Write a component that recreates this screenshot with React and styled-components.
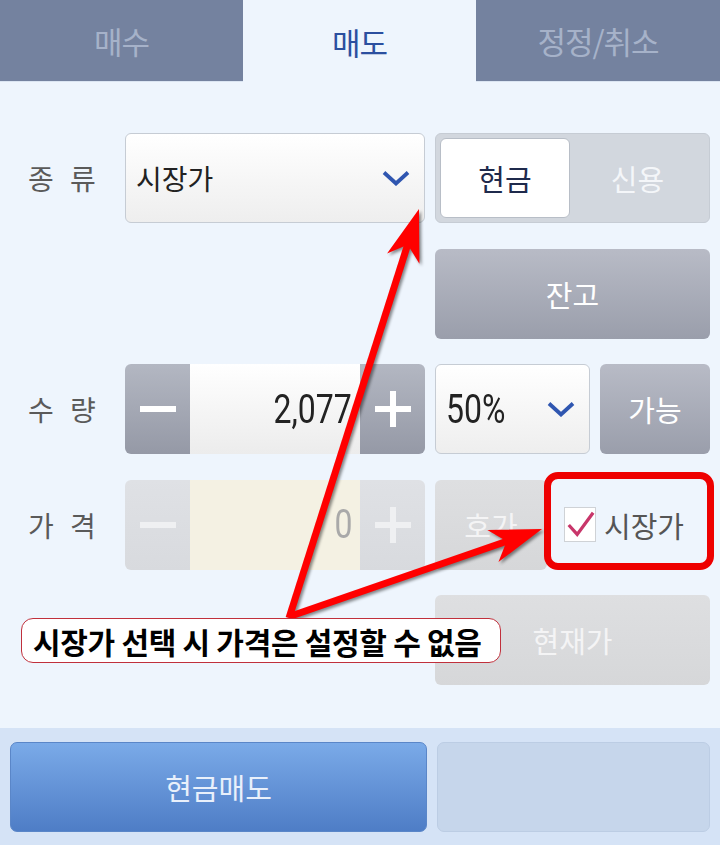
import React from 'react';
import styled, { createGlobalStyle, css } from 'styled-components';

const GlobalStyle = createGlobalStyle`
  html, body {
    margin: 0;
    padding: 0;
    background: #eef5fd;
  }
  body {
    font-family: 'Noto Sans CJK KR', 'Noto Sans', sans-serif;
  }
`;

const Screen = styled.div`
  position: relative;
  display: flex;
  flex-direction: column;
  width: 720px;
  height: 845px;
  overflow: hidden;
  background: #eef5fd;
`;

const Tabs = styled.nav`
  display: grid;
  grid-template-columns: 243px 233px 244px;
  height: 82px;
`;

const Tab = styled.div`
  display: flex;
  align-items: center;
  justify-content: center;
  font-size: 31px;
  letter-spacing: -1px;
  color: #a6b2c9;
  background: #74829f;
  border-bottom: 1px solid #dbe5f2;
  box-sizing: border-box;

  ${(p) =>
    p.active &&
    css`
      color: #2b4f9f;
      background: #eef5fd;
      border-bottom: none;
    `}
`;

const Form = styled.div`
  display: flex;
  flex-direction: column;
  gap: 25.5px;
  padding: 51px 10px 0 0;
`;

const Row = styled.div`
  display: flex;
  align-items: center;
  height: 90px;
`;

const Label = styled.div`
  width: 125px;
  padding-left: 28px;
  box-sizing: border-box;
  font-size: 28px;
  letter-spacing: 5px;
  color: #5a5a5a;
`;

const Main = styled.div`
  display: flex;
  width: 300px;
  height: 100%;
  margin-right: 10px;
`;

const Side = styled.div`
  display: flex;
  gap: 10px;
  width: 275px;
  height: 100%;
`;

const Select = styled.div`
  display: flex;
  align-items: center;
  justify-content: space-between;
  flex: ${(p) => (p.width ? `0 0 ${p.width}px` : '1')};
  height: 100%;
  padding: 0 ${(p) => p.padRight || 14}px 0 10px;
  box-sizing: border-box;
  border: 1px solid #c6ccd4;
  border-radius: 6px;
  background: linear-gradient(#ffffff, #eeeeee);
  font-size: 28px;
  color: #222;
`;

const Num = styled.span`
  display: inline-block;
  font-family: Roboto, 'Noto Sans', sans-serif;
  font-size: 40px;
  transform: scaleX(0.8);
  transform-origin: ${(p) => p.origin || 'left'} center;
  color: ${(p) => p.color || '#222'};
`;

const Toggle = styled.div`
  display: flex;
  flex: 1;
  padding: 4px;
  border: 1px solid #c6ccd4;
  border-radius: 6px;
  background: #d2d7de;
`;

const ToggleItem = styled.div`
  display: flex;
  align-items: center;
  justify-content: center;
  flex: ${(p) => (p.on ? '0 0 128px' : '1')};
  font-size: 29px;
  color: #f4f6f9;

  ${(p) =>
    p.on &&
    css`
      color: #1f2a4c;
      background: #fff;
      border: 1px solid #b8bec7;
      border-radius: 6px;
    `}
`;

const Button = styled.div`
  display: flex;
  align-items: center;
  justify-content: center;
  flex: ${(p) => (p.width ? `0 0 ${p.width}px` : '1')};
  height: 100%;
  border-radius: 6px;
  font-size: 29px;
  color: #fff;
  background: linear-gradient(#b8bbc6, #9a9eab);

  ${(p) =>
    p.disabled &&
    css`
      color: #f4f4f5;
      background: linear-gradient(#dedfe1, #d6d7d9);
    `}
`;

const Stepper = styled.div`
  display: flex;
  width: 300px;
  height: 100%;
  border-radius: 6px;
  overflow: hidden;
`;

const StepBtn = styled.div`
  display: flex;
  align-items: center;
  justify-content: center;
  flex: 0 0 65px;
  background: ${(p) =>
    p.disabled ? 'linear-gradient(#dfe1e5, #d8dade)' : 'linear-gradient(#b3b7c2, #9599a6)'};
`;

const StepValue = styled.div`
  display: flex;
  align-items: center;
  justify-content: flex-end;
  flex: 1;
  padding-right: 8px;
  background: ${(p) => (p.disabled ? '#f4f1e3' : 'linear-gradient(#ffffff, #ececec)')};
`;

const CheckLabel = styled.div`
  display: flex;
  align-items: center;
  gap: 8px;
  padding-left: 7px;
  font-size: 29px;
  color: #555;
`;

const CheckBox = styled.div`
  display: flex;
  align-items: center;
  justify-content: center;
  width: 32px;
  height: 35px;
  box-sizing: border-box;
  border: 1px solid #cfd2d6;
  background: #fff;
`;

const BottomBar = styled.div`
  display: flex;
  gap: 10px;
  margin-top: auto;
  height: 117px;
  padding: 14px 10px 13px;
  box-sizing: border-box;
  background: #d5e3f6;
`;

const OrderButton = styled.div`
  display: flex;
  align-items: center;
  justify-content: center;
  flex: ${(p) => (p.primary ? '0 0 415px' : '1')};
  border-radius: 7px;
  font-size: 29px;
  color: #e9f0fb;
  background: ${(p) => (p.primary ? 'linear-gradient(#7aaae8, #4e7dc6)' : '#c6d6eb')};
  border: 1px solid ${(p) => (p.primary ? '#5a86c8' : '#bccde4')};
`;

const Highlight = styled.div`
  position: absolute;
  left: 544px;
  top: 472px;
  width: 170px;
  height: 98px;
  box-sizing: border-box;
  border: 7px solid #ee0000;
  border-radius: 14px;
  pointer-events: none;
`;

const Note = styled.div`
  position: absolute;
  left: 21px;
  top: 618px;
  width: 480px;
  height: 45px;
  display: flex;
  align-items: center;
  padding-left: 11px;
  box-sizing: border-box;
  border: 1.5px solid #c0303c;
  border-radius: 12px;
  background: #fff;
  font-size: 30px;
  font-weight: 700;
  letter-spacing: -0.3px;
  color: #000;
  white-space: nowrap;
`;

const Overlay = styled.svg`
  position: absolute;
  left: 0;
  top: 0;
  pointer-events: none;
  filter: drop-shadow(2px 2px 1.5px rgba(0, 0, 0, 0.45));
`;

const Chevron = () => (
  <svg width="28" height="16" viewBox="0 0 28 16">
    <path d="M2 2.5 L14 13.5 L26 2.5" fill="none" stroke="#2f56b0" strokeWidth="3.8" />
  </svg>
);

const MinusIcon = ({ color }) => (
  <svg width="38" height="38" viewBox="0 0 38 38">
    <rect x="1" y="16" width="36" height="6" fill={color} />
  </svg>
);

const PlusIcon = ({ color }) => (
  <svg width="38" height="38" viewBox="0 0 38 38">
    <rect x="1" y="16" width="36" height="6" fill={color} />
    <rect x="16" y="1" width="6" height="36" fill={color} />
  </svg>
);

const Arrow = ({ from, to }) => {
  const dx = to[0] - from[0];
  const dy = to[1] - from[1];
  const len = Math.hypot(dx, dy);
  const ux = dx / len;
  const uy = dy / len;
  const nx = -uy;
  const ny = ux;
  const L = 52;
  const W = 17;
  const bx = to[0] - ux * L;
  const by = to[1] - uy * L;
  const cx = to[0] - ux * L * 0.72;
  const cy = to[1] - uy * L * 0.72;
  const head = [
    [to[0], to[1]],
    [bx + nx * W, by + ny * W],
    [cx, cy],
    [bx - nx * W, by - ny * W],
  ]
    .map((p) => p.join(','))
    .join(' ');
  return (
    <g>
      <line x1={from[0]} y1={from[1]} x2={cx + ux * 4} y2={cy + uy * 4} stroke="#f00" strokeWidth="7" />
      <polygon points={head} fill="#f00" />
    </g>
  );
};

const App = () => (
  <>
    <GlobalStyle />
    <Screen>
      <Tabs>
        <Tab>매수</Tab>
        <Tab active>매도</Tab>
        <Tab>정정/취소</Tab>
      </Tabs>

      <Form>
        <Row>
          <Label>종 류</Label>
          <Main>
            <Select>
              시장가
              <Chevron />
            </Select>
          </Main>
          <Side>
            <Toggle>
              <ToggleItem on>현금</ToggleItem>
              <ToggleItem>신용</ToggleItem>
            </Toggle>
          </Side>
        </Row>

        <Row>
          <Label />
          <Main />
          <Side>
            <Button>잔고</Button>
          </Side>
        </Row>

        <Row>
          <Label>수 량</Label>
          <Main>
            <Stepper>
              <StepBtn>
                <MinusIcon color="#fff" />
              </StepBtn>
              <StepValue>
                <Num origin="right">2,077</Num>
              </StepValue>
              <StepBtn>
                <PlusIcon color="#fff" />
              </StepBtn>
            </Stepper>
          </Main>
          <Side>
            <Select width={155} padRight={14}>
              <Num>50%</Num>
              <Chevron />
            </Select>
            <Button>가능</Button>
          </Side>
        </Row>

        <Row>
          <Label>가 격</Label>
          <Main>
            <Stepper>
              <StepBtn disabled>
                <MinusIcon color="#eff0f2" />
              </StepBtn>
              <StepValue disabled>
                <Num origin="right" color="#a9a9a9">0</Num>
              </StepValue>
              <StepBtn disabled>
                <PlusIcon color="#eff0f2" />
              </StepBtn>
            </Stepper>
          </Main>
          <Side>
            <Button disabled width={112}>
              호가
            </Button>
            <CheckLabel>
              <CheckBox>
                <svg width="32" height="30" viewBox="0 0 32 30">
                  <path d="M4 15 L13 25 L30 2" fill="none" stroke="#c8366a" strokeWidth="3.5" />
                </svg>
              </CheckBox>
              시장가
            </CheckLabel>
          </Side>
        </Row>

        <Row>
          <Label />
          <Main />
          <Side>
            <Button disabled>현재가</Button>
          </Side>
        </Row>
      </Form>

      <BottomBar>
        <OrderButton primary>현금매도</OrderButton>
        <OrderButton />
      </BottomBar>

      <Highlight />
      <Overlay width="720" height="845">
        <Arrow from={[289, 618]} to={[419, 209]} />
        <Arrow from={[291, 616]} to={[542, 529]} />
      </Overlay>
      <Note>시장가 선택 시 가격은 설정할 수 없음</Note>
    </Screen>
  </>
);

export default App;
